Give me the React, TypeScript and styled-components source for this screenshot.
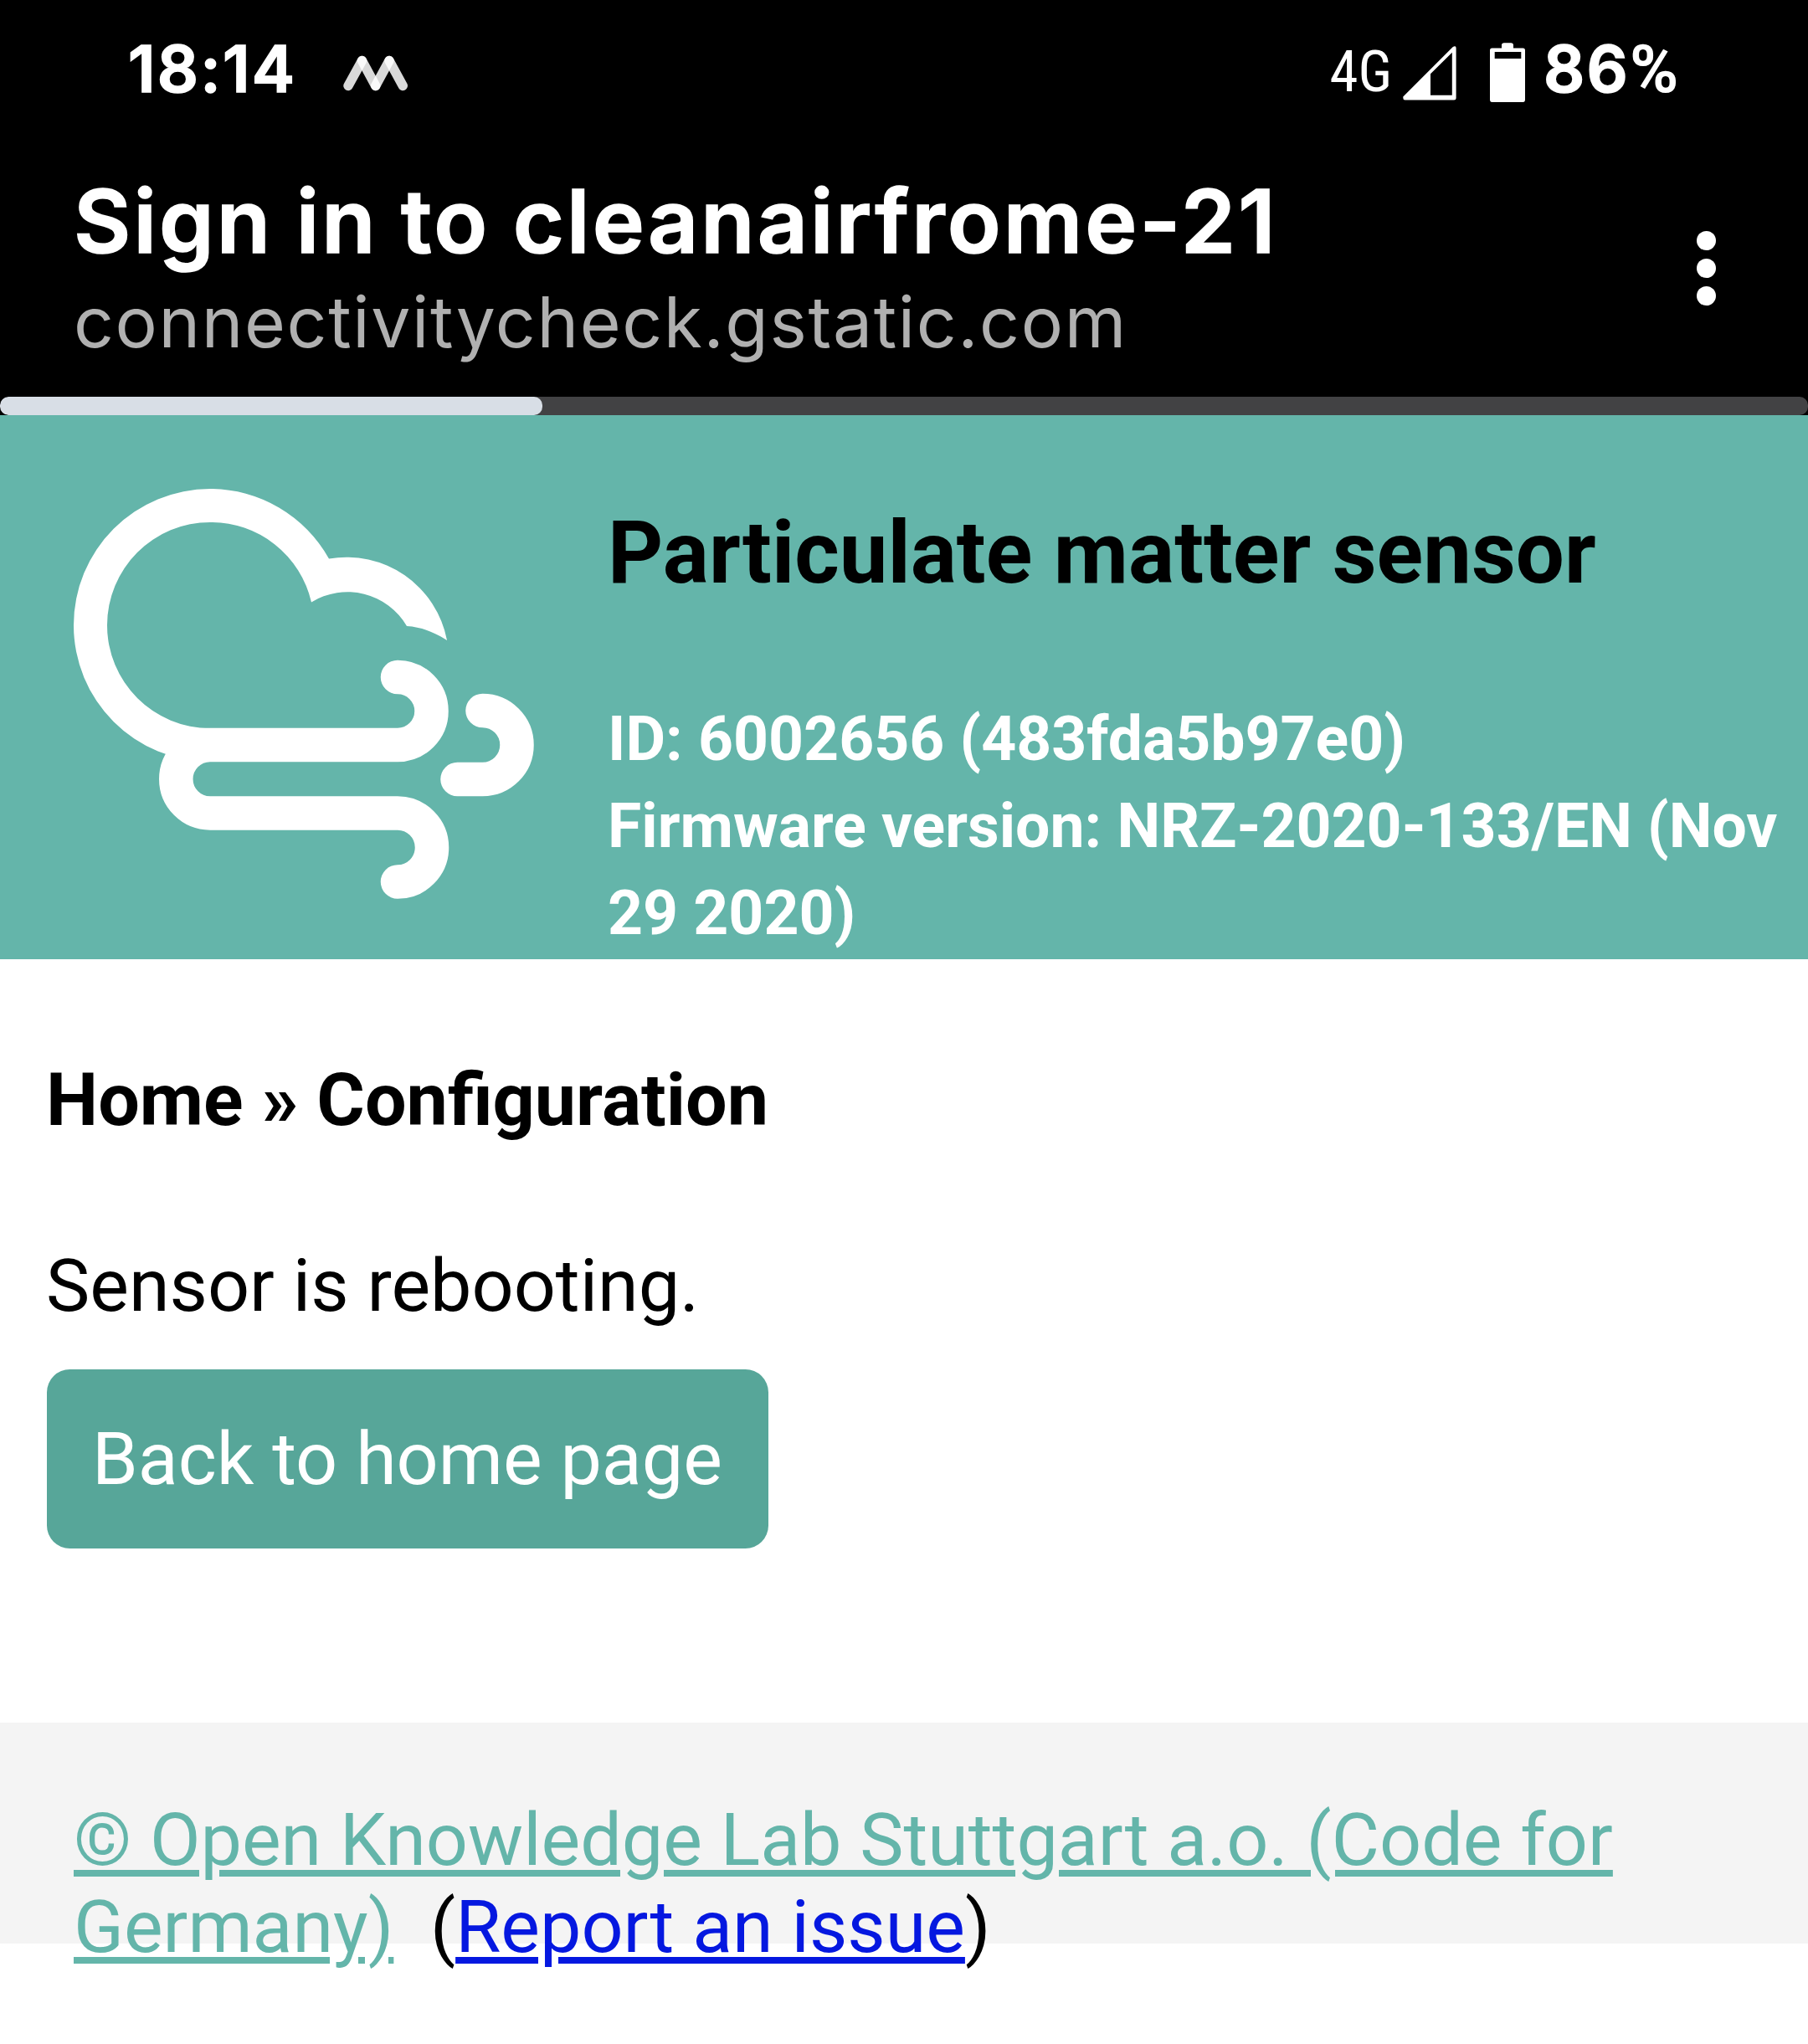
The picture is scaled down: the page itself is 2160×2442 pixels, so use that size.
import React from "react";
import styled, { createGlobalStyle } from "styled-components";

const color = {
  teal: "#64b5aa",
  button: "#57a699",
  link: "#0518e0",
  footer: "#f4f4f4",
  track: "#424244",
  progress: "#d8dee6",
  url: "#b0b0b0",
};

const GlobalStyle = createGlobalStyle`
  html, body { margin: 0; padding: 0; background: #fff; }
  body { font-family: Roboto, "Liberation Sans", sans-serif; font-size: 88px; line-height: 104px; color: #000; }
  * { box-sizing: border-box; }
`;

const Screen = styled.div`
  width: 2160px;
  height: 2442px;
  display: flex;
  flex-direction: column;
  overflow: hidden;
  background: #fff;
`;

const Chrome = styled.header`
  display: flex;
  flex-direction: column;
  flex: none;
  height: 496px;
  background: #000;
  color: #fff;
  font-family: Inter, Roboto, sans-serif;
`;

const StatusBar = styled.div`
  display: flex;
  align-items: center;
  justify-content: space-between;
  height: 164px;
  padding-left: 153px;
`;

const StatusGroup = styled.div<{ $width?: number }>`
  display: flex;
  align-items: center;
  height: 100%;
  width: ${(p) => (p.$width ? `${p.$width}px` : "auto")};
`;

const StatusText = styled.span`
  font-size: 77px;
  line-height: 92px;
  font-weight: 600;
  letter-spacing: 2.2px;
  white-space: nowrap;
  -webkit-text-stroke: 1.6px currentColor;
`;

const Clock = styled(StatusText)`
  width: 257px;
`;

const BatteryLevel = styled(StatusText)`
  margin-left: 22px;
`;

const Percent = styled.span`
  font-family: Roboto, sans-serif;
  font-size: 79px;
  font-weight: 700;
  letter-spacing: 0;
  -webkit-text-stroke: 0;
`;

const NetworkType = styled.span`
  width: 87px;
  margin-top: 7px;
  font-family: "Roboto Condensed", Roboto, sans-serif;
  font-size: 69px;
  line-height: 80px;
  font-weight: 400;
`;

const StatusIcon = styled.svg<{ $shift: number; $gap?: number }>`
  flex: none;
  display: block;
  margin-top: ${(p) => p.$shift}px;
  margin-left: ${(p) => p.$gap ?? 0}px;
`;

const Toolbar = styled.div`
  display: flex;
  justify-content: space-between;
  flex: 1;
  padding: 40px 110.5px 0 88px;
`;

const ToolbarTitle = styled.div`
  font-size: 105px;
  line-height: 120px;
  font-weight: 600;
  letter-spacing: 3.1px;
  word-spacing: -2px;
  white-space: nowrap;
  -webkit-text-stroke: 1.6px currentColor;
`;

const ToolbarUrl = styled.div`
  margin-top: 11px;
  font-size: 84px;
  line-height: 100px;
  letter-spacing: 1.6px;
  color: ${color.url};
`;

const MenuButton = styled.button`
  display: flex;
  flex-direction: column;
  gap: 10px;
  height: max-content;
  margin: 71.5px 0 0;
  padding: 0;
  border: 0;
  background: none;
`;

const MenuDot = styled.span`
  width: 23px;
  height: 23px;
  border-radius: 50%;
  background: #fff;
`;

const ProgressTrack = styled.div`
  height: 22px;
  border-radius: 10px;
  overflow: hidden;
  background: ${color.track};
`;

const ProgressFill = styled.div<{ $percent: number }>`
  width: ${(p) => p.$percent}%;
  height: 100%;
  border-radius: 10px;
  background: ${color.progress};
`;

const Banner = styled.section`
  display: flex;
  flex: none;
  gap: 88px;
  height: 650px;
  padding: 88px 0 0 88px;
  background: ${color.teal};
`;

const Logo = styled.svg`
  flex: none;
  display: block;
`;

const BannerText = styled.div`
  flex: 1;
  padding-top: 17px;
`;

const BannerTitle = styled.h3`
  margin: 0 0 110px;
  font-size: 102.96px;
  line-height: 120px;
  font-weight: 700;
`;

const BannerInfo = styled.p`
  margin: 0;
  font-size: 73.3px;
  line-height: 104px;
  font-weight: 700;
  color: #fff;
`;

const Content = styled.main`
  display: flex;
  flex-direction: column;
  align-items: flex-start;
  flex: none;
  height: 912px;
  padding: 116px 55px 0;
`;

const Breadcrumb = styled.h4`
  margin: 0 0 118px;
  font-size: 88px;
  line-height: 104px;
  font-weight: 700;
`;

const Message = styled.p`
  margin: 0 0 48px;
`;

const HomeButton = styled.a`
  margin-left: 1px;
  padding: 55px 55px 55px 54px;
  border-radius: 27.5px;
  background: ${color.button};
  color: #fff;
  text-decoration: none;
`;

const Footer = styled.footer`
  flex: none;
  height: 264px;
  padding: 88px 88px 0;
  background: ${color.footer};
`;

const FooterLink = styled.a<{ $color: string }>`
  color: ${(p) => p.$color};
  text-decoration: underline;
  text-decoration-thickness: 8px;
  text-underline-offset: 6px;
`;

const AppNotificationIcon = () => (
  <StatusIcon $shift={10} width="77" height="43" viewBox="0 0 77 43" stroke="#fff" strokeOpacity="0.85" strokeWidth="11.4" strokeLinecap="round">
    <line x1="6" y1="36.5" x2="22.5" y2="6.5" />
    <line x1="22.5" y1="6.5" x2="38.7" y2="36.5" />
    <line x1="38.7" y1="36.5" x2="55" y2="6.5" />
    <line x1="55" y1="6.5" x2="71.3" y2="36.5" />
  </StatusIcon>
);

const SignalIcon = () => (
  <StatusIcon $shift={10} width="64" height="65" viewBox="0 0 64 65" fill="#fff">
    <path
      fillRule="evenodd"
      d="M0.3 60.5 L59.5 1.2 Q63.6 -1 63.6 2.5 V62 Q63.6 64.5 61 64.5 H2.5 Q0.3 64.5 0.3 62 Z M33 33.3 V58.8 H58.8 V7.8 Z"
    />
  </StatusIcon>
);

const BatteryIcon = () => (
  <StatusIcon $shift={8} $gap={40.5} width="42" height="71" viewBox="0 0 42 71" fill="#fff">
    <path
      fillRule="evenodd"
      d="M14 6.5 V3 Q14 0.3 17 0.3 H25 Q28 0.3 28 3 V6.5 H39.5 Q42 6.5 42 9 V68 Q42 71 39.5 71 H2.5 Q0 71 0 68 V9 Q0 6.5 2.5 6.5 Z M5.7 11 V19 H37.3 V11 Z"
    />
  </StatusIcon>
);

const CloudLogo = () => (
  <Logo width="550" height="490" viewBox="0 0 550 490" fill="none">
    <path
      fill="#fff"
      d="M163 0 A163 163 0 0 1 305 83.500 A122 122 0 0 1 446 181 C432 172 416 165 398 164 A82 82 0 0 0 284 135.500 A123 123 0 0 0 163 40 A123 123 0 0 0 163 286 V326 A163 163 0 0 1 163 0 Z"
    />
    <g stroke="#fff" strokeWidth="40.5" strokeLinecap="round">
      <path d="M387 225 A40.5 40.5 0 0 1 387 306 H163 A40.5 40.5 0 0 0 163 387.5 H387 A41 41 0 0 1 387 469.5" />
      <path d="M488.500 265 A41 41 0 0 1 488.500 347 H458.500" />
    </g>
  </Logo>
);

export default function App() {
  return (
    <>
      <GlobalStyle />
      <Screen>
        <Chrome>
          <StatusBar>
            <StatusGroup>
              <Clock>18:14</Clock>
              <AppNotificationIcon />
            </StatusGroup>
            <StatusGroup $width={571.5}>
              <NetworkType>4G</NetworkType>
              <SignalIcon />
              <BatteryIcon />
              <BatteryLevel>
                86<Percent>%</Percent>
              </BatteryLevel>
            </StatusGroup>
          </StatusBar>
          <Toolbar>
            <div>
              <ToolbarTitle>Sign in to cleanairfrome-21</ToolbarTitle>
              <ToolbarUrl>connectivitycheck.gstatic.com</ToolbarUrl>
            </div>
            <MenuButton aria-label="More options">
              <MenuDot />
              <MenuDot />
              <MenuDot />
            </MenuButton>
          </Toolbar>
          <ProgressTrack>
            <ProgressFill $percent={30} />
          </ProgressTrack>
        </Chrome>
        <Banner>
          <CloudLogo />
          <BannerText>
            <BannerTitle>Particulate matter sensor</BannerTitle>
            <BannerInfo>
              ID: 6002656 (483fda5b97e0)
              <br />
              Firmware version: NRZ-2020-133/EN (Nov 29 2020)
            </BannerInfo>
          </BannerText>
        </Banner>
        <Content>
          <Breadcrumb>Home » Configuration</Breadcrumb>
          <Message>Sensor is rebooting.</Message>
          <HomeButton>Back to home page</HomeButton>
        </Content>
        <Footer>
          <FooterLink $color={color.teal}>© Open Knowledge Lab Stuttgart a.o. (Code for Germany)</FooterLink>
          &nbsp; (<FooterLink $color={color.link}>Report an issue</FooterLink>)
        </Footer>
      </Screen>
    </>
  );
}
